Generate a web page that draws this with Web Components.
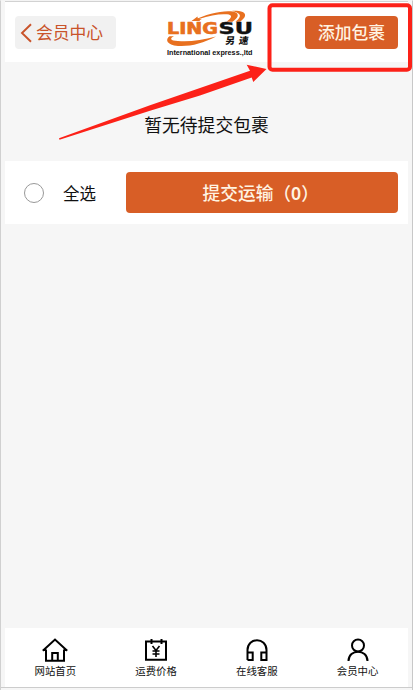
<!DOCTYPE html>
<html lang="zh-CN"><head><meta charset="utf-8"><title>会员中心</title>
<style>html,body{margin:0;height:100%;background:#f6f6f6;overflow:hidden}</style></head><body>
<parcel-page></parcel-page>
<script>
const define = (name, html) => customElements.define(name, class extends HTMLElement {
  constructor() {
    super();
    this.attachShadow({mode: 'open'}).innerHTML = html;
  }
});

define('back-button', `<style>
:host{display:flex;align-items:center;box-sizing:border-box;width:101px;height:33px;border-radius:4px;background:#f1f1f1;color:#c9532a;font-size:16.8px;line-height:33px;padding-left:5px;gap:4px;white-space:nowrap}
svg{flex:none}
</style><svg width="12" height="20" viewBox="0 0 12 20"><path d="M11 1.2 2 10l9 8.8" fill="none" stroke="#c9532a" stroke-width="1.9"/></svg><span><slot></slot></span>`);

define('action-button', `<style>
:host{display:flex;align-items:center;justify-content:center;box-sizing:border-box;background:#d85e26;color:#fff3e2;border-radius:4px;white-space:nowrap;font-weight:500}
</style><span><slot></slot></span>`);

define('brand-logo', `<style>:host{display:block;width:92px;height:52px}svg{display:block;overflow:visible}</style>
<svg width="92" height="52" viewBox="165 8 92 52">
<g fill="#e8701f">
<path d="M193 20.500C206 14 221 10.500 231 11.300c8.500.8 9 5.500 1.500 10.400h-6c5.500-4 6.500-6.700.5-7.400-7-.7-17 1-28 4.700l1 2z"/>
<path d="M232 10.900c9-.3 14 1.600 13 5.100-.5 1.900-2.300 3.800-5 5.700h-4.500c4-3.200 5.500-5.800 3.500-7.700-1.500-1.500-4-2.300-7-3.100z"/>
<path d="m191.500 21 6-4.500.3 2.200 4 .8-4.500 1.500z"/>
<path d="M174 36.200c-4.500 2.200-4 4.300 4 4.800 11 .8 24-.5 38-4.500-13 6.900-26 10.200-38 9.400-11.500-1-13-6.400-8.500-9.700z"/>
</g>
<text x="167" y="33.800" textLength="51" lengthAdjust="spacingAndGlyphs" font-family="DejaVu Sans" font-weight="700" font-size="15" fill="#e8701f" stroke="#e8701f" stroke-width=".6">LING</text>
<text x="218.500" y="33.800" textLength="34.500" lengthAdjust="spacingAndGlyphs" font-family="DejaVu Sans" font-weight="700" font-size="15" fill="#111" stroke="#111" stroke-width=".4">SU</text>
<text transform="translate(225 43.800) skewX(-8)" textLength="23" font-family="Noto Sans CJK SC" font-weight="900" font-size="9.500" fill="#111">另速</text>
<text x="167" y="55.400" textLength="85.500" lengthAdjust="spacingAndGlyphs" font-family="Liberation Sans" font-weight="700" font-size="7.200" fill="#111">International express.,ltd</text>
</svg>`);

define('page-header', `<style>
:host{display:flex;justify-content:space-between;box-sizing:border-box;height:61px;padding:14px 10px 0;background:#fff;border-top:1px solid #d2d2d2}
brand-logo{margin-top:-8px;margin-right:-1px}
action-button{width:93px;height:33px;font-size:16.800px;padding-bottom:1px}
</style><back-button>会员中心</back-button><brand-logo></brand-logo><action-button>添加包裹</action-button>`);

define('empty-state', `<style>
:host{display:flex;align-items:center;justify-content:center;box-sizing:border-box;height:99px;padding-top:24px;color:#111;font-size:17.800px}
</style><span><slot></slot></span>`);

define('submit-bar', `<style>
:host{display:flex;align-items:center;box-sizing:border-box;height:63px;padding:0 10px 0 19px;background:#fff;color:#111;font-size:16.500px}
i{box-sizing:border-box;width:20px;height:20px;border:1px solid #999;border-radius:50%;margin-right:19px;flex:none}
span{width:62.500px;flex:none}
action-button{flex:1;height:41px;font-size:17.700px;padding:0 2px 2px 0}
b{font-family:"Noto Sans",sans-serif;font-weight:600;line-height:1}
</style><i></i><span>全选</span><action-button>提交运输（<b>0</b>）</action-button>`);

define('tab-item', `<style>
:host{display:flex;flex:1;flex-direction:column;align-items:center;color:#111;font-size:10.400px;line-height:13px;padding-top:8px}
</style><slot name="icon"></slot><span><slot></slot></span>`);

define('tab-bar', `<style>
:host{display:flex;height:59px;background:#fff}
svg{display:block;width:28px;height:28px;fill:none;stroke:#000;stroke-width:2}
</style>
<tab-item><svg slot="icon" viewBox="0 0 28 28"><path d="M5 13.500v11.300h18V13.500M1.800 14.700 14 3.500l12.200 11.200M2 14h3m18 0h3M11.200 25v-8h5.600v8"/></svg>网站首页</tab-item>
<tab-item><svg slot="icon" viewBox="0 0 28 28"><path d="M4 5.500h20v18.300H4zM9.500 3v5M19.500 3v5"/><path d="m10.500 10 3.500 4.500 3.500-4.500M14 14v7M10.500 15h7M10.500 18h7" stroke-width="1.600"/></svg>运费价格</tab-item>
<tab-item><svg slot="icon" viewBox="0 0 28 28"><path d="M4.500 24V14C4.500 1 23.500 1 23.500 14v10h-5.200v-7.500h5.200M4.500 16.500h5.200V24H4.500"/></svg>在线客服</tab-item>
<tab-item><svg slot="icon" viewBox="0 0 28 28"><circle cx="14" cy="9.500" r="6"/><path d="M4.500 25c0-12.500 19-12.500 19 0"/></svg>会员中心</tab-item>`);

define('parcel-page', `<style>
:host{display:flex;flex-direction:column;box-sizing:border-box;height:690px;width:413px;padding:0 4px;background:#f6f6f6;border-left:1px solid #d0d0d0;border-right:1px solid #c8c8c8;border-top:1px solid #f4f4f4;font-family:"Noto Sans CJK SC",sans-serif;position:relative}
main{flex:1}
footer{height:2px;border-top:1px solid #ccc;margin:0 -4px}
.mark{position:absolute;left:-1px;top:-1px;pointer-events:none}
</style>
<page-header></page-header>
<main><empty-state>暂无待提交包裹</empty-state><submit-bar></submit-bar></main>
<tab-bar></tab-bar><footer></footer>
<svg class="mark" width="413" height="150"><rect x="269.500" y="5.200" width="140.500" height="64.500" rx="3" fill="none" stroke="#fc2118" stroke-width="4"/><path d="M59 138.300L150 105.300 250 70.700 246.700 64.700 266.500 69 253.300 82l-1.600-4.500L200 95.500 150 110.800 59.500 139.800z" fill="#fc2118"/></svg>`);
</script></body></html>
